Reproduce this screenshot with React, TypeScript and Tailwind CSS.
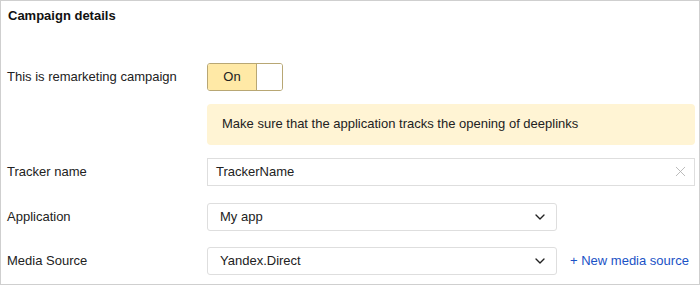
import { X, ChevronDown } from "lucide-react";

function Label({ children }: { children: React.ReactNode }) {
  return <div className="w-[200px] shrink-0 text-[13px] text-[#222]">{children}</div>;
}

function Select({ value }: { value: string }) {
  return (
    <div className="flex h-[28px] w-[350px] items-center justify-between rounded-[3px] border border-[#dedede] bg-white pl-[12px] pr-[8px] text-[13px] text-[#222]">
      <span>{value}</span>
      <ChevronDown className="h-[16px] w-[16px] text-[#222]" strokeWidth={2} />
    </div>
  );
}

export default function App() {
  return (
    <div className="h-[285px] w-[700px] border border-[#cfcfcf] bg-white font-['Liberation_Sans',Arial,sans-serif]">
      <div className="pl-[7px] pt-[5px] text-[13px] font-bold text-[#111]">Campaign details</div>

      <div className="mt-[37px] flex items-center pl-[6px]">
        <Label>This is remarketing campaign</Label>
        <div className="flex h-[28px] w-[76px] overflow-hidden rounded-[3px] border border-[#b8a774]">
          <div className="flex w-[48px] items-center justify-center bg-[#ffe9a6] text-[13px] text-[#222]">On</div>
          <div className="flex-1 border-l border-[#b8a774] bg-white"></div>
        </div>
      </div>

      <div className="ml-[206px] mr-[4px] mt-[13px] flex h-[41px] items-center rounded-[4px] bg-[#fff4d4] pl-[15px] text-[13px] text-[#222]">
        Make sure that the application tracks the opening of deeplinks
      </div>

      <div className="mt-[13px] flex items-center pl-[6px]">
        <Label>Tracker name</Label>
        <div className="mr-[4px] flex h-[28px] flex-1 items-center justify-between border border-[#dedede] bg-white pl-[8px] pr-[5px] text-[13px] text-[#222]">
          <span>TrackerName</span>
          <X className="h-[17px] w-[17px] text-[#b0b0b0]" strokeWidth={1.2} />
        </div>
      </div>

      <div className="mt-[17px] flex items-center pl-[6px]">
        <Label>Application</Label>
        <Select value="My app" />
      </div>

      <div className="mt-[16px] flex items-center pl-[6px]">
        <Label>Media Source</Label>
        <Select value="Yandex.Direct" />
        <span className="ml-[13px] text-[13px] text-[#1a52c6]">+ New media source</span>
      </div>
    </div>
  );
}
